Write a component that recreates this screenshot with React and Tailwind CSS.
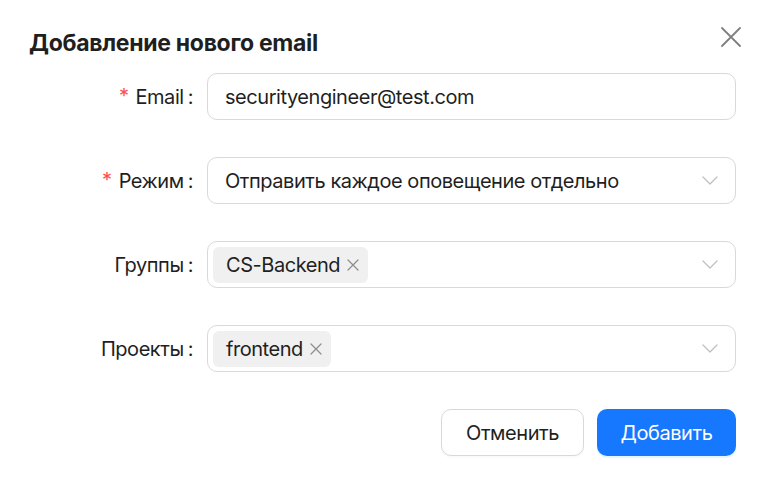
import React from "react";

const Chevron = () => (
  <svg width="16" height="9" viewBox="0 0 16 9" fill="none" className="shrink-0">
    <path d="M1 1l7 7 7-7" stroke="#bfbfbf" strokeWidth="1.3" strokeLinecap="round" strokeLinejoin="round" />
  </svg>
);

const SmallX = () => (
  <svg width="12" height="12" viewBox="0 0 12 12" fill="none">
    <path d="M1 1l10 10M11 1L1 11" stroke="#8c8c8c" strokeWidth="1.2" strokeLinecap="round" />
  </svg>
);

const Row = ({ label, required, children }) => (
  <div className="flex items-center h-[47px]">
    <div className="w-[178px] shrink-0 flex justify-end items-center pr-[14px] text-[20px] text-[#1f1f1f]">
      {required && <span className="text-[#ff4d4f] mr-[7px] text-[20px] leading-none relative top-[-1px]">*</span>}
      <span>{label}</span>
      <span className="ml-[4px]">:</span>
    </div>
    <div className="flex-1">{children}</div>
  </div>
);

const Tag = ({ text }) => (
  <div className="flex items-center h-[36px] pl-[13px] pr-[9px] bg-[#f0f0f0] rounded-[6px] text-[20px] text-[#1f1f1f]">
    <span>{text}</span>
    <span className="ml-[7px] flex items-center"><SmallX /></span>
  </div>
);

export default function App() {
  return (
    <div className="w-[765px] h-[480px] bg-white px-[29px] tracking-[-0.45px]" style={{ fontFamily: "Inter, 'Noto Sans', sans-serif" }}>
      <div className="flex items-start justify-between pt-[29px]">
        <h1 className="text-[23px] font-bold text-[#1f1f1f] leading-[28px] tracking-[-0.3px]">Добавление нового email</h1>
        <svg width="20" height="20" viewBox="0 0 20 20" fill="none" className="mt-[-2px] mr-[-5px]">
          <path d="M1 1l18 18M19 1L1 19" stroke="#7f7f7f" strokeWidth="1.8" strokeLinecap="round" />
        </svg>
      </div>
      <div className="mt-[16px] flex flex-col gap-[37px]">
        <Row label="Email" required>
          <div className="h-[47px] border border-[#d9d9d9] rounded-[10px] flex items-center px-[17px] text-[20px] text-[#1f1f1f]">
            securityengineer@test.com
          </div>
        </Row>
        <Row label="Режим" required>
          <div className="h-[47px] border border-[#d9d9d9] rounded-[10px] flex items-center justify-between pl-[17px] pr-[17px] text-[20px] text-[#1f1f1f]">
            <span>Отправить каждое оповещение отдельно</span>
            <Chevron />
          </div>
        </Row>
        <Row label="Группы">
          <div className="h-[47px] border border-[#d9d9d9] rounded-[10px] flex items-center justify-between pl-[5px] pr-[17px]">
            <Tag text="CS-Backend" />
            <Chevron />
          </div>
        </Row>
        <Row label="Проекты">
          <div className="h-[47px] border border-[#d9d9d9] rounded-[10px] flex items-center justify-between pl-[5px] pr-[17px]">
            <Tag text="frontend" />
            <Chevron />
          </div>
        </Row>
      </div>
      <div className="mt-[37px] flex justify-end gap-[13px]">
        <button className="w-[143px] h-[47px] border border-[#d9d9d9] rounded-[10px] bg-white text-[20px] text-[#1f1f1f] shadow-[0_2px_0_rgba(0,0,0,0.02)]">
          Отменить
        </button>
        <button className="w-[139px] h-[47px] rounded-[10px] bg-[#1677ff] text-[20px] text-white shadow-[0_2px_0_rgba(5,145,255,0.1)]">
          Добавить
        </button>
      </div>
    </div>
  );
}
